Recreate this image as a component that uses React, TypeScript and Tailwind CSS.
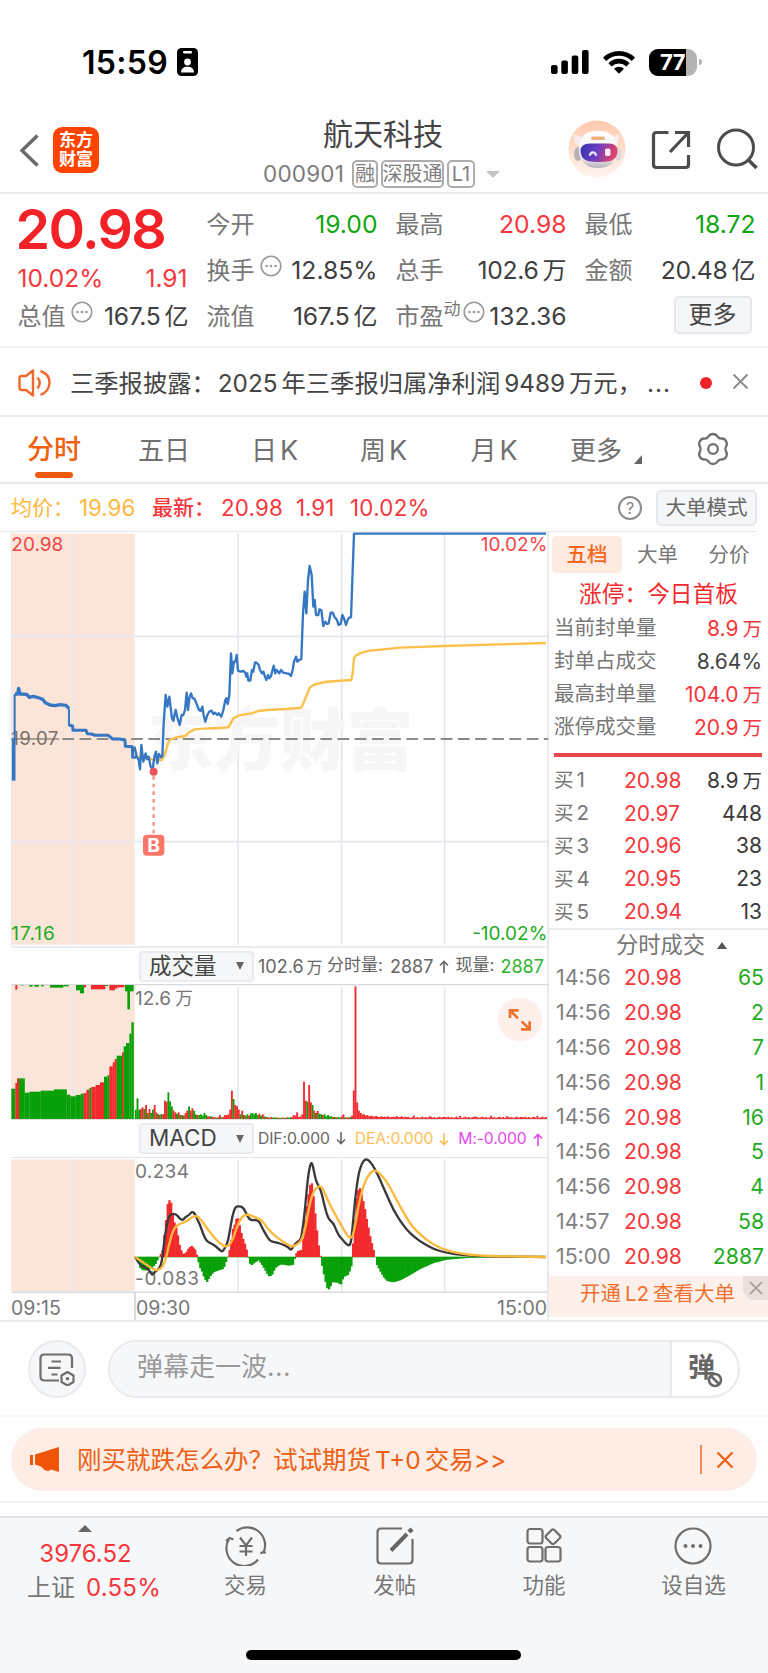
import type { ReactNode } from "react";
import clsx from "clsx";

const RED = "#f22a2e";
const GREEN = "#08a008";

type Point = [number, number];

const GRID_X = [714, 1025, 1334];

// "x,y x,y ..." -> points
function parse(src: string): Point[] {
  return src
    .trim()
    .split(/\s+/)
    .map((p) => p.split(",").map(Number) as Point);
}

// quadratic smoothing through segment midpoints
function smooth(pts: Point[]) {
  let d = `M${pts[0][0]} ${pts[0][1]}`;
  for (let i = 1; i < pts.length - 1; i++) {
    const [x, y] = pts[i];
    const [nx, ny] = pts[i + 1];
    d += `Q${x} ${y} ${(x + nx) / 2} ${(y + ny) / 2}`;
  }
  const last = pts[pts.length - 1];
  return `${d}L${last[0]} ${last[1]}`;
}

function valueAt(pts: Point[], x: number) {
  for (let i = 1; i < pts.length; i++) {
    if (x <= pts[i][0]) {
      const [x0, y0] = pts[i - 1];
      const [x1, y1] = pts[i];
      return y0 + ((y1 - y0) * (x - x0)) / (x1 - x0);
    }
  }
  return pts[pts.length - 1][1];
}

const AUCTION_LINE =
  "45,642 53,642 56,625 60,642 80,643 88,652 100,649 118,654 128,658 136,668 150,675 165,677 180,674 198,676 207,686";
const AUCTION_TAIL =
  "208,736 218,738 219,751 258,751 262,761 275,762 285,766 325,766 338,777 360,777 375,781 376,799 397,800 398,832 408,832";

const PRICE_LINE = `
403,800 410,830 416,840 420,868 424,795 430,845 437,820 441,838 446,830 452,860 458,868 463,830 468,815 472,850
477,822 483,832 487,828 491,730 497,645 502,680 508,650 516,715 520,722 527,690 532,712 539,735 545,705 550,705
555,690 560,638 564,690 569,650 573,640 578,655 583,655 590,672 597,690 602,693 607,680 611,705 616,725 622,705
628,695 635,692 640,702 645,698 652,705 656,700 664,710 670,690 676,660 679,655 683,672 688,645 693,520 697,580
702,545 706,545 710,525 714,572 722,575 730,573 736,578 739,590 742,580 745,602 751,602 756,570 760,575 765,547
770,548 776,555 780,570 786,580 790,575 795,590 799,600 804,585 808,595 813,588 821,557 826,580 830,570 838,580
843,570 850,578 860,580 868,582 873,588 878,570 882,545 888,530 892,545 898,540 904,537 909,400 914,335 919,400
924,300 929,258 935,285 940,380 944,360 948,405 955,405 958,388 964,390 970,438 976,425 981,432 986,430 992,398
998,398 1004,412 1010,418 1016,435 1022,432 1027,405 1032,415 1038,435 1043,420 1048,412 1053,412 1062,161 1638,161`;

const AVG_LINE = `
403,800 412,830 425,835 440,832 455,838 470,840 485,840 492,828 500,805 505,787 512,778 530,772 555,768 570,755
585,748 610,746 660,744 685,742 692,730 700,715 715,707 735,703 755,700 775,693 800,690 860,687 895,684 905,682
912,665 920,645 930,622 945,613 975,606 1010,603 1054,600 1058,580 1062,535 1068,526 1085,518 1110,512 1150,508
1200,503 1334,498 1500,493 1638,489`;

const HIST = parse(`
405,952 412,962 420,985 428,992 440,992 455,985 465,975 475,955 480,945 486,940 490,895 495,870 500,800 505,785
510,778 515,800 520,840 530,870 540,925 550,945 560,935 565,925 575,918 585,930 592,952 597,980 605,995 612,1015
620,1028 630,1010 640,998 655,992 670,988 678,965 684,948 690,920 697,870 705,850 711,826 718,855 726,890 735,915
742,940 746,965 752,978 762,970 775,962 785,975 795,992 805,1010 815,1008 825,985 840,975 850,975 865,978 878,976
884,955 890,935 905,930 910,890 915,830 922,780 928,740 934,725 940,770 945,820 950,870 955,915 960,945 965,975
972,1010 980,1045 988,1050 995,1028 1010,1028 1022,1035 1030,1012 1045,1005 1055,975 1059,900 1065,820 1070,760
1078,742 1086,770 1093,800 1100,840 1110,890 1120,930 1126,955 1130,975 1140,995 1150,1012 1160,1024 1180,1028
1200,1022 1230,1006 1260,988 1300,970 1340,960 1400,955 1450,953 1640,952`);

const DIF = parse(`
405,952 415,968 425,980 440,985 450,995 457,1008 465,995 478,988 486,965 492,910 498,870 505,835 512,823 528,822
538,836 548,842 556,832 568,826 576,815 585,822 592,840 600,855 610,885 620,905 635,912 648,920 660,932 667,936
675,925 684,905 690,870 697,830 705,803 715,799 730,803 740,825 748,838 756,842 775,840 785,862 798,885 810,905
830,908 850,915 865,922 873,932 880,920 890,908 903,900 908,865 915,810 920,750 927,690 935,663 942,695 948,725
957,740 965,760 975,805 985,838 1000,850 1008,870 1018,890 1028,900 1040,915 1052,919 1058,860 1065,780 1075,705
1085,672 1095,658 1108,662 1125,688 1140,720 1160,765 1180,810 1200,843 1220,870 1240,889 1260,905 1300,928
1340,940 1390,947 1460,950 1638,952`);

const DEA = parse(`
405,952 420,962 440,975 460,990 475,992 488,982 498,955 505,925 515,885 525,862 540,852 560,846 575,832 590,828
602,838 620,865 640,890 660,912 676,922 690,915 700,895 712,858 725,832 738,824 755,828 770,835 785,842 800,862
815,880 840,900 860,912 875,922 890,915 905,903 915,870 925,815 935,770 945,748 957,738 968,745 980,775 1000,815
1020,850 1040,885 1052,897 1060,885 1070,830 1080,775 1095,725 1110,700 1125,690 1140,702 1160,725 1180,762
1200,800 1220,835 1240,865 1280,902 1320,925 1360,938 1410,946 1470,949 1638,952`);

// one entry per minute from 09:30: colour + bar height
const VOLUME = `
g28 g62 g28 r30 r35 g30 r42 g18 r30 g18 g28 r42 r20 g15 r12 g15 r14 r55 r52 g80 g53 g38 r26 r20 g16 r20 g12 r12 g10
r18 r25 g38 r25 r32 g25 g14 r12 g12 g14 g10 g18 g12 r8 r8 g8 r6 r5 g4 r5 r12 g5 r6 r12 r12 r14 r28 r85 g60 r42 r38
r28 g14 r25 g12 r10 g14 r10 g16 g18 g14 g18 g12 r16 g10 r14 g8 r6 g5 r4 r6 g4 g5 r4 g4 r3 g4 r4 g3 r5 g4 g5 r6 r12
r10 r20 r6 r8 r14 r112 r55 g52 r102 r50 g42 r25 g18 r24 g16 g14 r12 g14 g8 g12 g8 g8 r6 g6 r5 g6 g4 r8 r14 g5 r4 r5
g6 r10 r86 r398 r50 r25 r18 r14 r14 r10 r12 r8 r10 r8 r7 r9 r7 r6 r8 r6 r7 r6 r8 r5 r6 r7 r5 r9 r6 r6 r8 r5 r7 r6`
  .trim()
  .split(/\s+/);

// call auction volume: x, width, top, colour
const AUCTION_BARS: [number, number, number, string][] = [
  [34, 12, 447, "g"],
  [46, 5, 430, "r"],
  [51, 6, 416, "r"],
  [57, 17, 416, "g"],
  [74, 14, 459, "g"],
  [88, 34, 456, "g"],
  [122, 40, 453, "g"],
  [162, 38, 449, "g"],
  [200, 11, 465, "g"],
  [211, 16, 470, "g"],
  [227, 15, 466, "g"],
  [242, 9, 462, "g"],
  [251, 8, 460, "r"],
  [259, 9, 450, "r"],
  [268, 6, 445, "g"],
  [274, 13, 442, "r"],
  [287, 13, 436, "r"],
  [300, 12, 428, "r"],
  [312, 11, 411, "g"],
  [323, 5, 406, "g"],
  [328, 10, 380, "r"],
  [338, 6, 368, "r"],
  [344, 6, 358, "r"],
  [350, 16, 348, "g"],
  [366, 5, 338, "r"],
  [371, 7, 320, "g"],
  [378, 10, 310, "g"],
  [388, 6, 282, "g"],
  [394, 7, 248, "g"],
];

// unmatched volume hanging from the top: x, width, bottom, colour
const AUCTION_TOP: [number, number, number, string][] = [
  [46, 6, 150, "r"],
  [64, 6, 138, "g"],
  [88, 10, 141, "g"],
  [103, 14, 141, "g"],
  [123, 8, 140, "g"],
  [150, 40, 144, "g"],
  [190, 16, 140, "g"],
  [228, 12, 152, "g"],
  [240, 12, 161, "g"],
  [252, 6, 143, "r"],
  [273, 43, 149, "r"],
  [316, 8, 139, "g"],
  [328, 17, 152, "r"],
  [345, 8, 146, "r"],
  [353, 20, 143, "r"],
  [375, 26, 155, "g"],
  [382, 8, 209, "g"],
];

const tone = (c: string) => (c === "r" ? RED : GREEN);

function GridLines({ top, bottom }: { top: number; bottom: number }) {
  return (
    <g stroke="#e6e7ee" strokeWidth="5">
      {GRID_X.map((x) => (
        <path key={x} d={`M${x} ${top}V${bottom}`} />
      ))}
      <path d={`M219 ${top}V${bottom}`} />
    </g>
  );
}

function PriceChart() {
  return (
    <svg
      width="548"
      height="417"
      viewBox="0 153 1644 1251"
      className="block"
      fontFamily="Inter, 'Noto Sans CJK SC', sans-serif"
    >
      <rect x="34" y="161" width="370" height="1233" fill="#fbe5d9" />
      <GridLines top={161} bottom={1394} />
      <path d="M34 469H1644M34 1085H1644" stroke="#e6e7ee" strokeWidth="5" />
      <path d="M34 1401H1644" stroke="#e4e6ea" strokeWidth="4" />
      <path d="M34 155V1401" stroke="#e4e6ea" strokeWidth="3" />
      <text x="440" y="856" fontSize="200" fontWeight="900" fill="#f5f5f5" fillOpacity="0.9">
        东方财富
      </text>
      <path d="M34 777H178" stroke="#8f8a86" strokeWidth="5" />
      <path d="M187 777H1644" stroke="#8a8a8a" strokeWidth="6" strokeDasharray="35 16.6" />
      <text x="34" y="796" fontSize="56" letterSpacing="1" fill="#7a7069">
        19.07
      </text>
      <path
        d={`M${AVG_LINE.trim().split(/\s+/).join("L")}`}
        fill="none"
        stroke="#fbc04a"
        strokeWidth="7"
        strokeLinejoin="round"
      />
      <g fill="none" stroke="#3577c4" strokeLinejoin="round">
        <path d="M41 775V902" strokeWidth="11" />
        <path d="M44 780V642M207 686V738" strokeWidth="6" />
        <polyline points={AUCTION_LINE} strokeWidth="10" />
        <polyline points={AUCTION_TAIL} strokeWidth="9" />
        <polyline points={PRICE_LINE} strokeWidth="7" />
      </g>
      <circle cx="461" cy="875" r="12" fill="#e8555b" />
      <path d="M461 888V1062" stroke="#fb8b83" strokeWidth="7" strokeDasharray="11 12" />
      <rect x="429" y="1064" width="64" height="63" rx="12" fill="#fb7569" />
      <text x="461" y="1116" fontSize="58" fontWeight="700" fill="#fff" textAnchor="middle">
        B
      </text>
      <g fontSize="57" fill="#f54346">
        <text x="34" y="212">
          20.98
        </text>
        <text x="1642" y="212" textAnchor="end">
          10.02%
        </text>
      </g>
      <g fontSize="57" fill="#1fab1f">
        <text x="34" y="1380" letterSpacing="3">
          17.16
        </text>
        <text x="1642" y="1380" textAnchor="end">
          -10.02%
        </text>
      </g>
    </svg>
  );
}

function VolumeChart() {
  const bars = Array.from({ length: 240 }, (_, i) => {
    const src = VOLUME[i] ?? `r${3 + ((i * 7) % 5) + (i % 9 === 0 ? 3 : 0)}`;
    return { x: 404.5 + i * 5.15, h: Number(src.slice(1)), color: tone(src[0]) };
  });

  return (
    <svg
      width="548"
      height="136"
      viewBox="0 133 1644 408"
      className="block"
      fontFamily="Inter, 'Noto Sans CJK SC', sans-serif"
    >
      <rect x="34" y="136" width="370" height="402" fill="#fbe5d9" />
      <GridLines top={142} bottom={538} />
      <path d="M34 134H1644" stroke="#d7dade" strokeWidth="5" />
      <path d="M34 539H1644" stroke="#e0dfe2" strokeWidth="4" />
      {AUCTION_BARS.map(([x, w, top, c]) => (
        <rect key={x} x={x} y={top} width={w + 0.5} height={538 - top} fill={tone(c)} />
      ))}
      {AUCTION_TOP.map(([x, w, bottom, c]) => (
        <rect key={x} x={x} y="136" width={w} height={bottom - 136} fill={tone(c)} />
      ))}
      {bars.map((b) => (
        <rect key={b.x} x={b.x} y={538 - b.h} width="5.6" height={b.h} fill={b.color} />
      ))}
      <text x="405" y="197" fontSize="57" fill="#777">
        12.6
      </text>
      <text x="526" y="197" fontSize="53" fill="#777">
        万
      </text>
      <circle cx="1560" cy="240" r="66" fill="#fdf0ea" />
      <g fill="none" stroke="#f0722f" strokeWidth="8">
        <path d="M1530 235V212H1556M1532 214L1554 236" />
        <path d="M1589 245V269H1563M1587 267L1565 245" />
      </g>
    </svg>
  );
}

function MacdChart() {
  const bars = Array.from({ length: 238 }, (_, i) => {
    const x = 407 + i * 5.15;
    return { x, y: valueAt(HIST, x + 2.5) };
  });

  return (
    <svg width="548" height="136" viewBox="0 652 1644 408" className="block" fontFamily="Inter, sans-serif">
      <rect x="34" y="659" width="370" height="396" fill="#fbe5d9" />
      <GridLines top={659} bottom={1055} />
      <path d="M34 653H1644" stroke="#e2e4e9" strokeWidth="4" />
      <path d="M34 1058H1644" stroke="#d7dade" strokeWidth="5" />
      <path d="M404 952H1638" stroke={GREEN} strokeWidth="2" />
      {bars.map(({ x, y }) => (
        <rect
          key={x}
          x={x}
          y={Math.min(y, 952)}
          width="7"
          height={Math.abs(952 - y)}
          fill={y < 952 ? RED : GREEN}
        />
      ))}
      <text x="405" y="714" fontSize="57" letterSpacing="1" fill="#777">
        0.234
      </text>
      <text x="405" y="1037" fontSize="57" letterSpacing="2" fill="#777">
        -0.083
      </text>
      <path d={smooth(DIF)} fill="none" stroke="#3a3a3a" strokeWidth="7" />
      <path d={smooth(DEA)} fill="none" stroke="#fbb93c" strokeWidth="7" />
    </svg>
  );
}

function StatusBar() {
  return (
    <div className="flex h-[100px] items-start justify-between pt-[46px] pr-[66px] pl-[82px]">
      <div className="flex h-[32px] items-center">
        <span className="w-[95px] pt-[2px] text-[32px] leading-[32px] font-semibold tracking-[0.300px] text-black">15:59</span>
        <svg width="21" height="28" viewBox="0 0 21 28">
          <rect width="21" height="28" rx="4.5" fill="#000" />
          <rect x="6" y="3" width="9" height="2.4" rx="1.2" fill="#fff" />
          <circle cx="10.5" cy="14" r="3.4" fill="#fff" />
          <path d="M4 24.5c0-4 2.6-5.8 6.5-5.8s6.5 1.8 6.5 5.8z" fill="#fff" />
        </svg>
      </div>
      <div className="flex h-[32px] items-center">
        <svg width="38" height="24" viewBox="0 0 38 24" fill="#000">
          <rect x="0" y="15" width="6.6" height="9" rx="2" />
          <rect x="10.3" y="10.5" width="6.6" height="13.5" rx="2" />
          <rect x="20.7" y="5.5" width="6.6" height="18.5" rx="2" />
          <rect x="31" y="0" width="6.6" height="24" rx="2" />
        </svg>
        <svg width="32" height="24" viewBox="0 0 32 24" className="ml-[14px]" fill="none" stroke="#000" strokeWidth="4.6">
          <path d="M1.6 9.3a20.5 20.5 0 0 1 28.8 0" />
          <path d="M7 14.8a12.8 12.8 0 0 1 18 0" />
          <path d="M16 23.8l-5-5a7.2 7.2 0 0 1 10 0z" fill="#000" stroke="none" />
        </svg>
        <div className="ml-[14px] flex h-[27px] w-[48px] overflow-hidden rounded-[9px] bg-[#b3b3b3]">
          <div className="flex w-[37px] items-center justify-end bg-black pr-px text-[22px] font-bold tracking-[-0.500px] text-white">
            77
          </div>
        </div>
        <div className="ml-[2px] h-[6px] w-[3px] rounded-r-full bg-[#b3b3b3]" />
      </div>
    </div>
  );
}

function Robot() {
  return (
    <svg width="58" height="58" viewBox="0 0 58 58">
      <defs>
        <linearGradient id="halo" x1="0" y1="0" x2="0" y2="1">
          <stop offset="0" stopColor="#ffc9ac" />
          <stop offset="1" stopColor="#fff4ee" />
        </linearGradient>
        <linearGradient id="visor" x1="0" y1="0" x2="1" y2="0.2">
          <stop offset="0" stopColor="#3530ae" />
          <stop offset="0.5" stopColor="#6b3fc0" />
          <stop offset="1" stopColor="#e0436a" />
        </linearGradient>
        <linearGradient id="shell" x1="0" y1="0" x2="0" y2="1">
          <stop offset="0" stopColor="#ffffff" />
          <stop offset="0.7" stopColor="#f3eff1" />
          <stop offset="1" stopColor="#b9b3b8" />
        </linearGradient>
      </defs>
      <circle cx="29" cy="29" r="28.5" fill="url(#halo)" />
      <path d="M5 15q1-1 3 0l8 3-5 9q-5-5-6-12zM50 14q1 0 1 2-1 7-3 10l-6-7z" fill="#f2ecee" />
      <ellipse cx="10" cy="34" rx="4" ry="7" fill="#b8b0b5" />
      <ellipse cx="50" cy="34" rx="3.5" ry="7" fill="#e0d8db" />
      <path d="M11 30C11 16 18 11 30 11s19 5 19 19c0 12-8 18-19 18S11 42 11 30z" fill="url(#shell)" />
      <rect x="23" y="16.5" width="14" height="3.5" rx="1.7" fill="#eeb07a" />
      <path d="M22 23.5h19q8.500 0 8.500 7.500t-7 10q-11.500 2-23 0-7-2.500-7-10t9.500-7.500z" fill="url(#visor)" />
      <path d="M22 35c1-3.500 5-3.500 6 0" fill="none" stroke="#e4e6ff" strokeWidth="2.2" strokeLinecap="round" />
      <rect x="37" y="28.5" width="5.5" height="7.5" rx="1.7" fill="#ffe9f2" />
    </svg>
  );
}

function Tag({ children, className }: { children: ReactNode; className?: string }) {
  return (
    <span
      className={clsx(
        "flex h-[28px] shrink-0 items-center justify-center rounded-[5px] border-2 border-[#adadad] text-[20px] leading-none whitespace-nowrap text-[#808080]",
        className,
      )}
    >
      {children}
    </span>
  );
}

function Header() {
  return (
    <header className="flex h-[94px] items-start border-b-2 border-[#ececee]">
      <div className="flex w-[263px] items-start pt-[27px] pl-[20px]">
        <svg width="19" height="33" viewBox="0 0 19 33" className="mt-[7px]" fill="none" stroke="#6a6a6a" strokeWidth="3.5">
          <path d="M17.5 1.5L2 16.500l15.500 15" />
        </svg>
        <div className="ml-[14px] flex size-[46px] flex-col items-center justify-center rounded-[9px] bg-[#ff4400] text-[17px] leading-[19px] font-bold text-white">
          <span>东方</span>
          <span>财富</span>
        </div>
      </div>
      <div className="flex w-[315px] flex-col pt-[14px]">
        <h1 className="w-[240px] text-center text-[30px] leading-[40px] text-[#444]">航天科技</h1>
        <div className="mt-[6px] flex h-[28px] items-center">
          <span className="w-[89px] text-[22.500px] leading-[28px] tracking-[0.200px] text-[#7c7c7c]">000901</span>
          <Tag className="w-[26px]">融</Tag>
          <Tag className="ml-[3px] w-[63px]">深股通</Tag>
          <Tag className="ml-[3px] w-[28px]">L1</Tag>
          <span className="ml-[11px] border-x-[7px] border-t-[7px] border-x-transparent border-t-[#c4c4c4]" />
        </div>
      </div>
      <div className="flex items-start pt-[20px]">
        <div className="-ml-[10px]">
          <Robot />
        </div>
        <svg width="40" height="40" viewBox="0 0 40 40" className="mt-[10px] ml-[24.500px]" fill="none" stroke="#4c4c4c" strokeWidth="3.2">
          <path d="M17.500 2.500H5.500q-3 0-3 3v29q0 3 3 3h29q3 0 3-3V25M24 2.500h13.500V17M37 3L19 22" />
        </svg>
        <svg width="42" height="42" viewBox="0 0 42 42" className="mt-[8px] ml-[25px]" fill="none" stroke="#4c4c4c" strokeWidth="3">
          <circle cx="20" cy="19.5" r="17.5" />
          <path d="M32 31.500l8.500 8.500" strokeWidth="3.6" />
        </svg>
      </div>
    </header>
  );
}

function Dots({ className }: { className?: string }) {
  return (
    <svg width="22" height="22" viewBox="0 0 22 22" className={className} fill="#999">
      <circle cx="11" cy="11" r="9.8" fill="none" stroke="#999" strokeWidth="1.6" />
      <circle cx="6.5" cy="11" r="1.3" />
      <circle cx="11" cy="11" r="1.3" />
      <circle cx="15.5" cy="11" r="1.3" />
    </svg>
  );
}

function Stat({
  label,
  value,
  unit,
  sup,
  dots,
  className = "text-[#3f3f3f]",
}: {
  label: string;
  value: string;
  unit?: string;
  sup?: string;
  dots?: boolean;
  className?: string;
}) {
  return (
    <div className="flex h-[46px] w-[171px] items-center">
      <span className="shrink-0 text-[24px] text-[#777]">{label}</span>
      {sup && <span className="-mt-[14px] shrink-0 text-[17px] text-[#777]">{sup}</span>}
      {dots && <Dots className={clsx("-mt-[10px] shrink-0", sup ? "ml-[2px]" : "ml-[5px]")} />}
      <span className={clsx("ml-auto text-[24.700px] whitespace-nowrap", unit && "tracking-[-0.300px]", className)}>
        {value}
        {unit && <span className="ml-[4px] text-[24px] tracking-normal">{unit}</span>}
      </span>
    </div>
  );
}

function Quote() {
  return (
    <section className="flex h-[154px] gap-[18px] border-b-2 border-[#f2f2f5] pt-[8px] pl-[17.500px]">
      <div className="w-[171px]">
        <div className="-ml-[2px] h-[56px] text-[55.500px] leading-[54px] font-semibold tracking-[-1.600px] text-[#f22226]">20.98</div>
        <div className="flex h-[36px] items-center justify-between pt-[4px] pr-px text-[24.500px] text-[#f5383b]">
          <span>10.02%</span>
          <span>1.91</span>
        </div>
        <Stat label="总值" dots value="167.5" unit="亿" />
      </div>
      <div>
        <Stat label="今开" value="19.00" className="text-[#12a512]" />
        <Stat label="换手" dots value="12.85%" />
        <Stat label="流值" value="167.5" unit="亿" />
      </div>
      <div>
        <Stat label="最高" value="20.98" className="text-[#f5383b]" />
        <Stat label="总手" value="102.6" unit="万" />
        <Stat label="市盈" sup="动" dots value="132.36" />
      </div>
      <div>
        <Stat label="最低" value="18.72" className="text-[#12a512]" />
        <Stat label="金额" value="20.48" unit="亿" />
        <button className="mt-[2px] ml-[89px] flex h-[38px] w-[78px] items-center justify-center rounded-[5px] border-2 border-[#e6e8ee] bg-[#f5f6f8] text-[24px] text-[#444]">
          更多
        </button>
      </div>
    </section>
  );
}

function NewsBar() {
  return (
    <section className="flex h-[69px] items-center border-b-2 border-[#eeeef0] pt-[2px] pl-[18px]">
      <svg width="33" height="28" viewBox="0 0 33 28" fill="none" stroke="#f0682a" strokeWidth="2.4">
        <path d="M15 1.500v25L8 21H3.500q-2 0-2-2V9q0-2 2-2H8z" strokeLinejoin="round" />
        <path d="M19.500 8.500q4.500 5.500 0 11M22.500 2q9.500 3.500 9 12t-9 12" />
      </svg>
      <p className="ml-[19px] w-[603px] pt-px text-[24.300px] whitespace-nowrap text-[#444]">
        三季报披露：<span className="ml-[2px]">2025</span>
        <span className="ml-[4px]">年三季报归属净利润</span>
        <span className="ml-[4px]">9489</span>
        <span className="ml-[4px]">万元，</span>
        <span className="ml-[5px] tracking-[1px]">...</span>
      </p>
      <span className="ml-[27px] size-[12px] rounded-full bg-[#f22226]" />
      <svg width="17" height="17" viewBox="0 0 17 17" className="-mt-[3px] ml-[20px]" fill="none" stroke="#8a8a8a" strokeWidth="1.8">
        <path d="M1.500 1.500l14 14M15.500 1.500l-14 14" />
      </svg>
    </section>
  );
}

const TABS: { zh: string; k?: boolean; width: string }[] = [
  { zh: "五日", width: "w-[112px]" },
  { zh: "日", k: true, width: "w-[109px]" },
  { zh: "周", k: true, width: "w-[109px]" },
  { zh: "月", k: true, width: "w-[112px]" },
];

function PeriodTabs() {
  return (
    <nav className="flex h-[67px] items-stretch border-b-2 border-[#e6e8ec] text-[26px] text-[#707070]">
      <div className="flex w-[108px] flex-col items-center text-[27px] font-medium text-[#f0600f]">
        <span className="mt-[13px] leading-[40px]">分时</span>
        <span className="mt-[2px] h-[6px] w-[38px] rounded-[3px] bg-[#ee5a0a]" />
      </div>
      {TABS.map((t) => (
        <div key={t.zh} className={clsx("flex justify-center pt-[14px] leading-[40px]", t.width)}>
          {t.zh}
          {t.k && <span className="ml-[3px] text-[27px]">K</span>}
        </div>
      ))}
      <div className="flex w-[120px] pt-[14px] pl-[20px] leading-[40px]">
        更多
        <svg width="8" height="9" viewBox="0 0 8 9" className="mt-[24px] ml-[12px] shrink-0">
          <path d="M8 0v9H0z" fill="#666" />
        </svg>
      </div>
      <svg width="34" height="34" viewBox="0 0 34 34" className="mt-[15px] ml-[26px]" fill="none" stroke="#707070" strokeWidth="2.3">
        <path
          strokeLinejoin="round"
          d="M12.500 4.500q1.500-2.500 4.500-2.500t4.500 2.500q1.500 2.300 4.500 2q3 .2 4.300 3t-.3 5q-1.300 2.500 0 5q1.600 2.200.3 5t-4.300 3q-3-.3-4.500 2q-1.500 2.500-4.500 2.500t-4.500-2.500q-1.500-2.300-4.500-2q-3-.2-4.300-3t.3-5q1.300-2.500 0-5q-1.600-2.200-.3-5t4.300-3q3 .3 4.500-2z"
        />
        <circle cx="17" cy="17" r="4.8" />
      </svg>
    </nav>
  );
}

function Summary() {
  return (
    <div className="flex h-[47px] items-center pt-px pl-[11px] text-[22.300px] text-[#f5383b]">
      <div className="flex w-[141px] items-center text-[#fbb93c]">
        <span className="w-[68px] text-[21px]">均价：</span>
        19.96
      </div>
      <span className="w-[69px] text-[21px] font-medium">最新：</span>
      <span className="w-[75px] tracking-[0.200px]">20.98</span>
      <span className="w-[54px]">1.91</span>
      <span className="w-[268px] tracking-[0.300px]">10.02%</span>
      <span className="flex size-[24px] items-center justify-center rounded-full border-2 border-[#8c8c8c] text-[16px] text-[#808080]">?</span>
      <button className="ml-[14px] flex h-[36px] w-[101px] items-center justify-center rounded-[5px] border-2 border-[#e6e8ee] bg-[#f5f6f8] text-[20.500px] text-[#666]">
        大单模式
      </button>
    </div>
  );
}

function Picker({ children }: { children: ReactNode }) {
  return (
    <button className="flex h-[31px] w-[115px] shrink-0 items-center justify-between rounded-[4px] border-2 border-[#e9ebf0] bg-[#f6f7f9] px-[8px] text-[22.500px] leading-none text-[#444]">
      {children}
      <span className="border-x-[4.500px] border-t-[8px] border-x-transparent border-t-[#666]" />
    </button>
  );
}

function Arrow({ up }: { up?: boolean }) {
  return (
    <svg width="10" height="13" viewBox="0 0 10 13" className="mx-[6px] inline-block shrink-0" fill="none" stroke="currentColor" strokeWidth="1.6">
      <path d={up ? "M5 13V1.500M1 5.500l4-4 4 4" : "M5 0v11.500M1 7.500l4 4 4-4"} />
    </svg>
  );
}

function Charts() {
  return (
    <div className="w-[549px] shrink-0 border-r-2 border-[#e8eaee]">
      <PriceChart />
      <div className="flex h-[36px] items-center pl-[139px] text-[18px] whitespace-nowrap text-[#666]">
        <Picker>成交量</Picker>
        <span className="ml-[4px] w-[67px]">
          102.6<span className="ml-[3px] text-[16px]">万</span>
        </span>
        <span className="ml-[2px] w-[63px] text-[17px]">分时量:</span>
        <span>2887</span>
        <Arrow up />
        <span className="w-[45px] text-[17px]">现量:</span>
        <span className="text-[#2fb42f]">2887</span>
      </div>
      <VolumeChart />
      <div className="flex h-[37px] items-center pl-[139px] text-[15.700px] whitespace-nowrap text-[#666]">
        <Picker>MACD</Picker>
        <span className="ml-[4px] tracking-[-0.100px]">DIF:0.000</span>
        <Arrow />
        <span className="ml-[3px] tracking-[-0.100px] text-[#fbbf55]">DEA:0.000</span>
        <span className="text-[#fbbf55]">
          <Arrow />
        </span>
        <span className="ml-[3px] tracking-[-0.100px] text-[#e548ef]">M:-0.000</span>
        <span className="text-[#e548ef]">
          <Arrow up />
        </span>
      </div>
      <MacdChart />
      <div className="flex h-[27px] pl-[11px] text-[19.500px] leading-[31px] text-[#777]">
        <span className="w-[123px]">09:15</span>
        <span className="border-l-2 border-[#d7dade]">09:30</span>
        <span className="ml-auto">15:00</span>
      </div>
    </div>
  );
}

const SEAL = [
  { label: "当前封单量", value: "8.9", unit: "万", red: true },
  { label: "封单占成交", value: "8.64%" },
  { label: "最高封单量", value: "104.0", unit: "万", red: true },
  { label: "涨停成交量", value: "20.9", unit: "万", red: true },
];

const BIDS = [
  { level: 1, price: "20.98", volume: "8.9", unit: "万" },
  { level: 2, price: "20.97", volume: "448" },
  { level: 3, price: "20.96", volume: "38" },
  { level: 4, price: "20.95", volume: "23" },
  { level: 5, price: "20.94", volume: "13" },
];

const DEALS = [
  ["14:56", "65"],
  ["14:56", "2"],
  ["14:56", "7"],
  ["14:56", "1"],
  ["14:56", "16"],
  ["14:56", "5"],
  ["14:56", "4"],
  ["14:57", "58"],
  ["15:00", "2887"],
];

function OrderBook() {
  return (
    <aside className="w-[219px] text-[20.500px]">
      <div className="flex pt-[5px] pl-[3px] leading-[37px] text-[#777]">
        <span className="w-[70px] rounded-[5px] bg-[#fdeae1] text-center font-medium text-[#f8661c]">五档</span>
        <span className="w-[71px] text-center">大单</span>
        <span className="w-[72px] text-center">分价</span>
      </div>
      <div className="mt-[3px] h-[36px] text-center text-[22.700px] leading-[36px] whitespace-nowrap text-[#f22a2e]">涨停：今日首板</div>
      <div className="pr-[6px] pl-[5px]">
        {SEAL.map((s) => (
          <div key={s.label} className="flex h-[33px] items-center justify-between">
            <span className="text-[#777]">{s.label}</span>
            <span className={clsx("text-[21px]", s.red ? "text-[#f5383b]" : "text-[#444]")}>
              {s.value}
              {s.unit && <span className="ml-[4px] text-[19.500px]">{s.unit}</span>}
            </span>
          </div>
        ))}
        <div className="mt-[9px] mb-[7px] h-[4px] bg-[#e6474b]" />
        {BIDS.map((b) => (
          <div key={b.level} className="flex h-[32.900px] items-center">
            <span className="w-[70px] text-[#777]">
              <span className="text-[19.500px]">买</span>
              <span className="ml-[3px]">{b.level}</span>
            </span>
            <span className="text-[21px] text-[#f5383b]">{b.price}</span>
            <span className="ml-auto text-[21px] text-[#3a3a3a]">
              {b.volume}
              {b.unit && <span className="ml-[4px] text-[19.500px]">{b.unit}</span>}
            </span>
          </div>
        ))}
      </div>
      <div className="flex h-[32px] items-center justify-center gap-[12px] border-t-2 border-[#e8eaee] pl-[42px] text-[22.300px] leading-[28px] text-[#777]">
        分时成交
        <span className="mr-[16px] border-x-[5px] border-b-[7px] border-x-transparent border-b-[#555]" />
      </div>
      {DEALS.map(([time, volume], i) => (
        <div key={i} className="flex h-[34.900px] items-center pr-[4px] pl-[7px] text-[21.200px]">
          <span className="w-[68px] text-[21.300px] text-[#808080]">{time}</span>
          <span className="text-[#f5383b]">20.98</span>
          <span className="ml-auto text-[#1fab1f]">{volume}</span>
        </div>
      ))}
      <div className="mt-[2px] flex h-[41px] items-start justify-end bg-[#fdf0ea] text-[#f0702f]">
        <span className="mr-[8px] leading-[36px] whitespace-nowrap">
          开通<span className="mx-[4px]">L2</span>查看大单
        </span>
        <span className="flex h-[24px] w-[25px] items-center justify-center rounded-bl-[12px] bg-[#eadfdb]">
          <svg width="14" height="14" viewBox="0 0 14 14" stroke="#a09a98" strokeWidth="1.7">
            <path d="M1 1l12 12M13 1L1 13" />
          </svg>
        </span>
      </div>
    </aside>
  );
}

function Danmaku() {
  return (
    <section className="flex h-[95px] items-start border-t-2 border-[#ececee] pt-[18px] pl-[28px]">
      <div className="flex size-[58px] items-center justify-center rounded-full border-2 border-[#e8eaee] bg-[#f6f7f9]">
        <svg width="36" height="33" viewBox="0 0 36 33" fill="none" stroke="#6e6e6e" strokeWidth="2.2">
          <path d="M20 27.500H5.500q-4 0-4-4v-18q0-4 4-4h23.500q4 0 4 4V15" />
          <path d="M12.500 8.500H22M9 14.800h12.500M12.500 21.500h6" />
          <path d="M28.500 19l6 3.500v6.500l-6 3.500-6-3.500v-6.500z" strokeLinejoin="round" />
          <circle cx="28.5" cy="25.7" r="1.8" fill="#6e6e6e" stroke="none" />
        </svg>
      </div>
      <div className="ml-[22px] flex h-[58px] w-[632px] overflow-hidden rounded-full border-2 border-[#e8eaee]">
        <div className="w-[562px] border-r-2 border-[#e8eaee] bg-[#f6f7f9] pl-[27px] text-[26px] leading-[50px] text-[#999]">
          弹幕走一波<span className="tracking-[0.500px]">...</span>
        </div>
        <div className="relative pl-[16px] text-[27px] leading-[52px] font-bold text-[#666]">
          弹
          <svg width="16" height="16" viewBox="0 0 16 16" className="absolute top-[30px] left-[35px]" fill="#fff" stroke="#666" strokeWidth="2.6">
            <circle cx="8" cy="8" r="6" />
            <path d="M4 4l8 8" />
          </svg>
        </div>
      </div>
    </section>
  );
}

function Promo() {
  return (
    <section className="border-y-2 border-t-[#f8f8f8] border-b-[#f2f2f4] px-[11px] pt-[11px] pb-[10px]">
      <div className="flex h-[63px] items-center rounded-full bg-[#fdede4] pl-[19px] text-[#ee5f14]">
        <svg width="29" height="27" viewBox="0 0 29 27" fill="#ee5508">
          <path d="M0 9h3v10H0zM5 8.500L29 1v25l-8-2.500c-2 2-6 1.500-7.500-.5L11 20.500 5 18.500z" />
        </svg>
        <span className="ml-[18px] pt-px text-[24.500px] whitespace-nowrap">
          刚买就跌怎么办？试试期货<span className="mx-[4px]">T+0</span>交易&gt;&gt;
        </span>
        <span className="ml-auto h-[29px] w-[2px] bg-[#f08a54]" />
        <svg width="18" height="18" viewBox="0 0 18 18" className="mr-[23px] ml-[14px]" stroke="#ee5f14" strokeWidth="2.2">
          <path d="M1.500 1.500l15 15M16.500 1.500l-15 15" />
        </svg>
      </div>
    </section>
  );
}

function NavItem({ label, children }: { label: string; children: ReactNode }) {
  return (
    <div className="flex w-[149.300px] flex-col items-center pt-[8px] text-[21.500px] text-[#777]">
      <svg width="42" height="40" viewBox="0 0 42 40" fill="none" stroke="#6e6e6e" strokeWidth="2.2">
        {children}
      </svg>
      <span className="mt-[5px] leading-[28px]">{label}</span>
    </div>
  );
}

function BottomNav() {
  return (
    <footer className="mt-[13px] flex h-[157px] flex-col border-t-2 border-[#e2e3ea] bg-[#f6f7f9]">
      <div className="flex h-[132px]">
        <div className="flex w-[171px] flex-col items-center pt-[7px] text-[24px] text-[#f5383b]">
          <span className="border-x-[7px] border-b-[7px] border-x-transparent border-b-[#666]" />
          <span className="mt-[6px] leading-[32px]">3976.52</span>
          <span className="mt-[2px] ml-[17px] flex gap-[11px] leading-[32px] whitespace-nowrap">
            <span className="text-[#777]">上证</span>
            <span className="tracking-[0.200px]">0.55%</span>
          </span>
        </div>
        <NavItem label="交易">
          <path d="M11.500 5a17.800 17.800 0 0 1 27 21.500M33 33.500A17.800 17.800 0 0 1 4 13" />
          <path d="M1 15l3.500-3 4 1.500M36 26.500h5M38.500 26l-3 1.500" />
          <path d="M15 11.500l6 8 6-8M14.500 20h13M14.500 25.500h13M21 19.500V30" />
        </NavItem>
        <NavItem label="发帖">
          <path d="M28 2.500H7q-3.500 0-3.500 3.500v28q0 3.500 3.500 3.500h28q3.500 0 3.500-3.500V13" />
          <path d="M17 24.500L33 8" strokeWidth="4" stroke="#666" />
          <path d="M35 6l3-3" strokeWidth="4.5" stroke="#666" />
        </NavItem>
        <NavItem label="功能">
          <rect x="4.5" y="3" width="15" height="14.5" rx="2.5" />
          <rect x="4.5" y="21" width="15" height="14.5" rx="2.5" />
          <rect x="22.5" y="21" width="15" height="14.5" rx="2.5" />
          <rect x="24.3" y="5" width="11.5" height="11.5" rx="2" transform="rotate(45 30 10.7)" />
        </NavItem>
        <NavItem label="设自选">
          <circle cx="21" cy="20" r="17.5" />
          <g fill="#6e6e6e" stroke="none">
            <circle cx="13.5" cy="20" r="2" />
            <circle cx="21" cy="20" r="2" />
            <circle cx="28.5" cy="20" r="2" />
          </g>
        </NavItem>
      </div>
      <div className="ml-[246px] h-[10px] w-[275px] rounded-full bg-black" />
    </footer>
  );
}

export default function App() {
  return (
    <div className="h-[1673px] w-[768px] overflow-hidden bg-[#fefefe] font-['Inter','Noto_Sans_CJK_SC',sans-serif]">
      <StatusBar />
      <Header />
      <Quote />
      <NewsBar />
      <PeriodTabs />
      <Summary />
      <div className="mr-[12px] h-px bg-[#e4e6ea]" />
      <div className="-mt-px flex h-[789px]">
        <Charts />
        <OrderBook />
      </div>
      <Danmaku />
      <Promo />
      <BottomNav />
    </div>
  );
}
